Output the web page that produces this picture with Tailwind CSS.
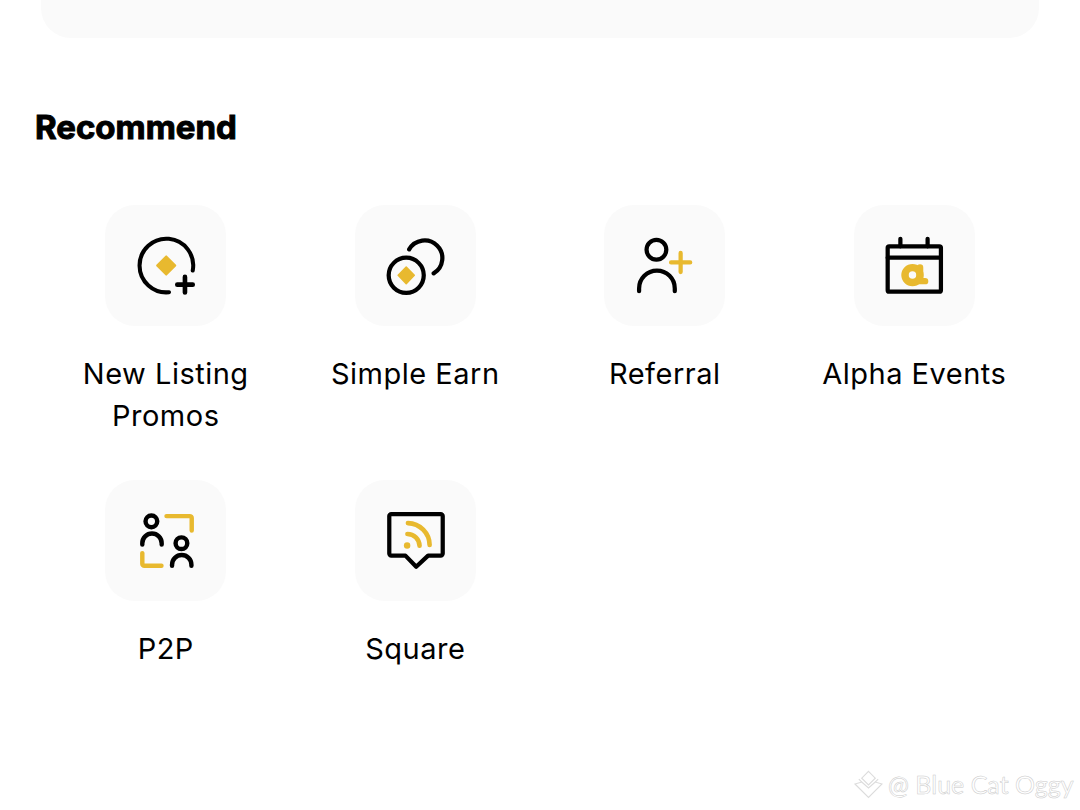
<!doctype html>
<html>
<head>
<meta charset="utf-8">
<script src="https://cdn.jsdelivr.net/npm/@tailwindcss/browser@4"></script>
</head>
<body class="bg-white">
<div class="relative w-[1080px] h-[810px] overflow-hidden bg-white text-black font-['Inter',sans-serif]">
  <div class="ml-[41px] w-[998px] h-[38px] bg-[#fafafa] rounded-b-[30px]"></div>
  <h2 class="ml-[35px] mt-[67px] h-[44px] leading-[44px] text-[33px] font-bold tracking-[0px] [-webkit-text-stroke:1px_#000] font-['Inter',sans-serif]">Recommend</h2>
  <div class="ml-[41px] mt-[56px] w-[998px] grid grid-cols-4 gap-y-[43px] text-[29px] font-normal leading-[42px] text-center tracking-[0.5px]">

    <div class="flex flex-col items-center gap-[27px]">
      <div class="w-[121px] h-[121px] rounded-[30px] bg-[#fafafa]">
        <svg viewBox="0 0 120 120" class="w-full h-full" fill="none" stroke="#000" stroke-width="4" stroke-linecap="round" stroke-linejoin="round">
          <path d="M87 65A26.6 26.6 0 1 0 63.5 86.5"/>
          <path d="M71.7 79H87M79.3 71.3V86.7" stroke-width="4.6"/>
          <path d="M60.7 51 L69.7 60 L60.7 69 L51.7 60Z" fill="#e8b92f" stroke="#e8b92f" stroke-width="2"/>
        </svg>
      </div>
      <div class="w-[200px]">New Listing Promos</div>
    </div>

    <div class="flex flex-col items-center gap-[27px]">
      <div class="w-[121px] h-[121px] rounded-[30px] bg-[#fafafa]">
        <svg viewBox="0 0 120 120" class="w-full h-full" fill="none" stroke="#000" stroke-width="4.2" stroke-linecap="round" stroke-linejoin="round">
          <circle cx="50.8" cy="69.7" r="17.4"/>
          <path d="M53.7 44A17.6 17.6 0 1 1 78 67.8"/>
          <path d="M50.8 61.5 L58.8 69.7 L50.8 78 L42.8 69.7Z" fill="#e8b92f" stroke="#e8b92f" stroke-width="1.5"/>
        </svg>
      </div>
      <div>Simple Earn</div>
    </div>

    <div class="flex flex-col items-center gap-[27px]">
      <div class="w-[121px] h-[121px] rounded-[30px] bg-[#fafafa]">
        <svg viewBox="0 0 120 120" class="w-full h-full" fill="none" stroke="#000" stroke-width="4.2" stroke-linecap="round" stroke-linejoin="round">
          <circle cx="52" cy="44.3" r="9.8"/>
          <path d="M34.8 85.5V82.7a17.7 17.7 0 0 1 35.4 0V85.5"/>
          <path d="M66.5 57H85.5M76 47.5V66.5" stroke="#e8b92f"/>
        </svg>
      </div>
      <div>Referral</div>
    </div>

    <div class="flex flex-col items-center gap-[27px]">
      <div class="w-[121px] h-[121px] rounded-[30px] bg-[#fafafa]">
        <svg viewBox="0 0 120 120" class="w-full h-full" fill="none" stroke="#000" stroke-width="4.2" stroke-linecap="round" stroke-linejoin="round">
          <rect x="33.4" y="41" width="52.8" height="45" rx="1.5"/>
          <path d="M33.4 52.3H86.2M46 33.5V41M73 33.5V41"/>
          <circle cx="58" cy="69.5" r="7.4" stroke="#e8b92f" stroke-width="7.4"/>
          <path d="M65.5 62V75.5H70.5" stroke="#e8b92f" stroke-width="6.4"/>
        </svg>
      </div>
      <div>Alpha Events</div>
    </div>

    <div class="flex flex-col items-center gap-[27px]">
      <div class="w-[121px] h-[121px] rounded-[30px] bg-[#fafafa]">
        <svg viewBox="0 0 120 120" class="w-full h-full" fill="none" stroke="#000" stroke-width="4.4" stroke-linecap="round" stroke-linejoin="round">
          <circle cx="46" cy="41" r="5.8"/>
          <path d="M37 64V62.7a9.6 9.6 0 0 1 19.2 0V64"/>
          <circle cx="75.8" cy="62.7" r="5.8"/>
          <path d="M66.5 85V84a9.6 9.6 0 0 1 19.2 0V85"/>
          <path d="M61 35.8H84a2 2 0 0 1 2 2V50M37 72.5V83a2 2 0 0 0 2 2H56" stroke="#e8b92f"/>
        </svg>
      </div>
      <div>P2P</div>
    </div>

    <div class="flex flex-col items-center gap-[27px]">
      <div class="w-[121px] h-[121px] rounded-[30px] bg-[#fafafa]">
        <svg viewBox="0 0 120 120" class="w-full h-full" fill="none" stroke="#000" stroke-width="4.2" stroke-linecap="round" stroke-linejoin="round">
          <path d="M36 33.8H85a2 2 0 0 1 2 2V73a2 2 0 0 1-2 2H72.5L60.7 86 50 75H36a2 2 0 0 1-2-2V35.8a2 2 0 0 1 2-2Z"/>
          <circle cx="51.7" cy="65" r="3.2" fill="#e8b92f" stroke="none"/>
          <path d="M52 53.5A12 12 0 0 1 64 65.2M52.5 42.8A22 22 0 0 1 74 64.5" stroke="#e8b92f" stroke-width="4.6"/>
        </svg>
      </div>
      <div>Square</div>
    </div>
  </div>

  <div class="absolute left-[854px] top-[769px] flex items-center gap-[5px] text-[25px] leading-[30px] whitespace-nowrap text-white [-webkit-text-stroke:0.5px_#c9c9c9] font-['Lato',sans-serif]">
    <svg viewBox="0 0 30 30" class="w-[29px] h-[30px] shrink-0" fill="#fff" stroke="#dcdcdc" stroke-width="1.2">
      <path d="M15 2 L22 9 L15 16 L8 9Z M5 10 L12 17 M25 10 L18 17"/>
      <path d="M1 15 L15 29 L29 15 L22 13 L15 19 L8 13Z"/>
    </svg>
    <span>@ Blue Cat Oggy</span>
  </div>
</div>
</body>
</html>
